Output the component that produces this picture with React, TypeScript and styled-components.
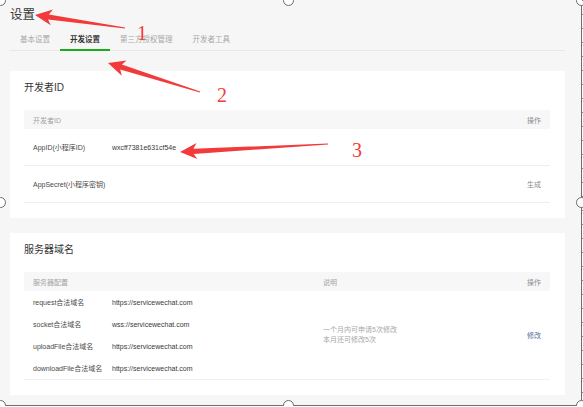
import React from 'react';
import styled, { createGlobalStyle } from 'styled-components';

const GlobalStyle = createGlobalStyle`
  html, body {
    margin: 0;
    padding: 0;
    background: #ffffff;
  }
  body {
    font-family: "Liberation Sans", "Noto Sans CJK SC", sans-serif;
    color: #353535;
  }
`;

type Pt = [number, number];

// tapered red annotation arrow, tail -> tip
const arrowPoints = (tail: Pt, tip: Pt) => {
  const dx = tip[0] - tail[0];
  const dy = tip[1] - tail[1];
  const len = Math.hypot(dx, dy);
  const ux = dx / len;
  const uy = dy / len;
  const nx = -uy;
  const ny = ux;
  const headLen = 17;
  const headW = 8;
  const at = (d: number, w: number): string =>
    `${(tip[0] - ux * d + nx * w).toFixed(1)},${(tip[1] - uy * d + ny * w).toFixed(1)}`;
  return [
    at(len, 0.4),
    at(headLen * 0.8, 2.6),
    at(headLen, headW),
    `${tip[0]},${tip[1]}`,
    at(headLen, -headW),
    at(headLen * 0.8, -2.6),
    at(len, -0.4),
  ].join(' ');
};

const arrows: { tail: Pt; tip: Pt }[] = [
  { tail: [125, 28], tip: [35, 15] },
  { tail: [200, 92], tip: [108, 63] },
  { tail: [328, 144], tip: [180, 152] },
];

const marks = [
  { n: '1', x: 137, y: 23 },
  { n: '2', x: 217, y: 85 },
  { n: '3', x: 352, y: 140 },
];

const handles: Pt[] = [
  [0, 0], [288, 0], [581, 0],
  [0, 202], [581, 202],
  [0, 405], [288, 405], [581, 405],
];

const tabs = ['基本设置', '开发设置', '第三方授权管理', '开发者工具'];

const domains = [
  { name: 'request合法域名', url: 'https://servicewechat.com' },
  { name: 'socket合法域名', url: 'wss://servicewechat.com' },
  { name: 'uploadFile合法域名', url: 'https://servicewechat.com' },
  { name: 'downloadFile合法域名', url: 'https://servicewechat.com' },
];

const App: React.FC = () => {
  return (
    <>
      <GlobalStyle />
      <Frame>
        <Content>
          <PageTitle>设置</PageTitle>
          <TabBar>
            {tabs.map((t, i) => (
              <Tab key={t} $active={i === 1}>
                {t}
              </Tab>
            ))}
          </TabBar>

          <Card>
            <CardTitle>开发者ID</CardTitle>
            <HeadRow $cols="79px 1fr auto">
              <Span2>开发者ID</Span2>
              <Action>操作</Action>
            </HeadRow>
            <IdRow>
              <Label>AppID(小程序ID)</Label>
              <Value>wxcff7381e631cf54e</Value>
              <Action />
            </IdRow>
            <IdRow>
              <Label>AppSecret(小程序密钥)</Label>
              <Value />
              <Action>生成</Action>
            </IdRow>
          </Card>

          <Card $gap={15}>
            <CardTitle>服务器域名</CardTitle>
            <HeadRow $cols="79px 211px 1fr auto">
              <Span2>服务器配置</Span2>
              <span>说明</span>
              <Action>操作</Action>
            </HeadRow>
            <DomainBody>
              {domains.map((d, i) => (
                <React.Fragment key={d.name}>
                  <Label style={{ gridRow: i + 1 }}>{d.name}</Label>
                  <Value style={{ gridRow: i + 1 }}>{d.url}</Value>
                </React.Fragment>
              ))}
              <Note>
                一个月内可申请5次修改
                <br />
                本月还可修改5次
              </Note>
              <LinkAction>修改</LinkAction>
            </DomainBody>
          </Card>
        </Content>

        <Overlay width="583" height="407" viewBox="0 0 583 407">
          {arrows.map((a, i) => (
            <polygon key={i} points={arrowPoints(a.tail, a.tip)} fill="#f23a3a" />
          ))}
        </Overlay>
        {marks.map((m) => (
          <Mark key={m.n} $x={m.x} $y={m.y}>
            {m.n}
          </Mark>
        ))}
        {handles.map(([x, y], i) => (
          <Handle key={i} $x={x} $y={y} />
        ))}
      </Frame>
    </>
  );
};

const Frame = styled.div`
  position: relative;
  width: 582px;
  height: 406px;
  box-sizing: border-box;
  background: #f6f6f6;
  border-right: 1px solid #6f6f6f;
  border-bottom: 1px solid #6f6f6f;

  &::before {
    content: '';
    position: absolute;
    left: 0;
    right: -1px;
    bottom: -3px;
    height: 2px;
    background: repeating-linear-gradient(to right, #8a8a8a 0 1px, transparent 1px 14px);
  }

  &::after {
    content: '';
    position: absolute;
    top: 0;
    bottom: -1px;
    right: -3px;
    width: 2px;
    background: repeating-linear-gradient(to bottom, #8a8a8a 0 1px, transparent 1px 14px);
  }
`;

const Content = styled.div`
  padding: 0 16px 0 10px;
`;

const PageTitle = styled.div`
  padding-top: 8px;
  font-size: 12.5px;
  line-height: 14px;
  color: #353535;
`;

const TabBar = styled.div`
  display: flex;
  margin-top: 9px;
  border-bottom: 1px solid #e7e7e7;
`;

const Tab = styled.div<{ $active?: boolean }>`
  padding: 0 10px;
  font-size: 7.5px;
  line-height: 18px;
  color: ${(p) => (p.$active ? '#353535' : '#a8a8a8')};
  font-weight: ${(p) => (p.$active ? 600 : 400)};
  border-bottom: 2px solid ${(p) => (p.$active ? '#1aad19' : 'transparent')};
  margin-bottom: -1px;
`;

const Card = styled.div<{ $gap?: number }>`
  margin-top: ${(p) => p.$gap ?? 20}px;
  background: #ffffff;
  padding: 10px 15px 15px 14px;
`;

const CardTitle = styled.div`
  font-size: 10px;
  line-height: 14px;
  color: #353535;
  margin-bottom: 15px;
`;

const HeadRow = styled.div<{ $cols: string }>`
  display: grid;
  grid-template-columns: ${(p) => p.$cols};
  align-items: center;
  height: 19px;
  padding: 0 9px;
  background: #f7f7f7;
  font-size: 7px;
  color: #a3a3a3;
`;

const Span2 = styled.span`
  grid-column: span 2;
`;

const IdRow = styled.div`
  display: grid;
  grid-template-columns: 79px 1fr auto;
  align-items: center;
  height: 36px;
  padding: 0 9px;
  border-bottom: 1px solid #efefef;
`;

const Label = styled.span`
  grid-column: 1;
  font-size: 7px;
  color: #4a4a4a;
  white-space: nowrap;
`;

const Value = styled.span`
  grid-column: 2;
  font-size: 7px;
  color: #3a3a3a;
  white-space: nowrap;
`;

const Action = styled.span`
  font-size: 7px;
  color: #8c8c8c;
  text-align: right;
`;

const DomainBody = styled.div`
  display: grid;
  grid-template-columns: 79px 211px 1fr auto;
  grid-template-rows: repeat(4, 22px);
  align-items: center;
  padding: 0 9px;
  border-bottom: 1px solid #f1f1f1;
`;

const Note = styled.span`
  grid-column: 3;
  grid-row: 1 / span 4;
  font-size: 7px;
  line-height: 10px;
  color: #a8a8a8;
`;

const LinkAction = styled.span`
  grid-column: 4;
  grid-row: 1 / span 4;
  font-size: 7px;
  color: #576b95;
  text-align: right;
`;

const Overlay = styled.svg`
  position: absolute;
  left: 0;
  top: 0;
  pointer-events: none;
`;

const Mark = styled.span<{ $x: number; $y: number }>`
  position: absolute;
  left: ${(p) => p.$x}px;
  top: ${(p) => p.$y}px;
  font-family: "Liberation Serif", serif;
  font-size: 20px;
  line-height: 20px;
  color: #f23a3a;
`;

const Handle = styled.span<{ $x: number; $y: number }>`
  position: absolute;
  left: ${(p) => p.$x - 5}px;
  top: ${(p) => p.$y - 5}px;
  width: 9px;
  height: 9px;
  border-radius: 50%;
  border: 1px solid #6a6a6a;
  background: #ffffff;
`;

export default App;
